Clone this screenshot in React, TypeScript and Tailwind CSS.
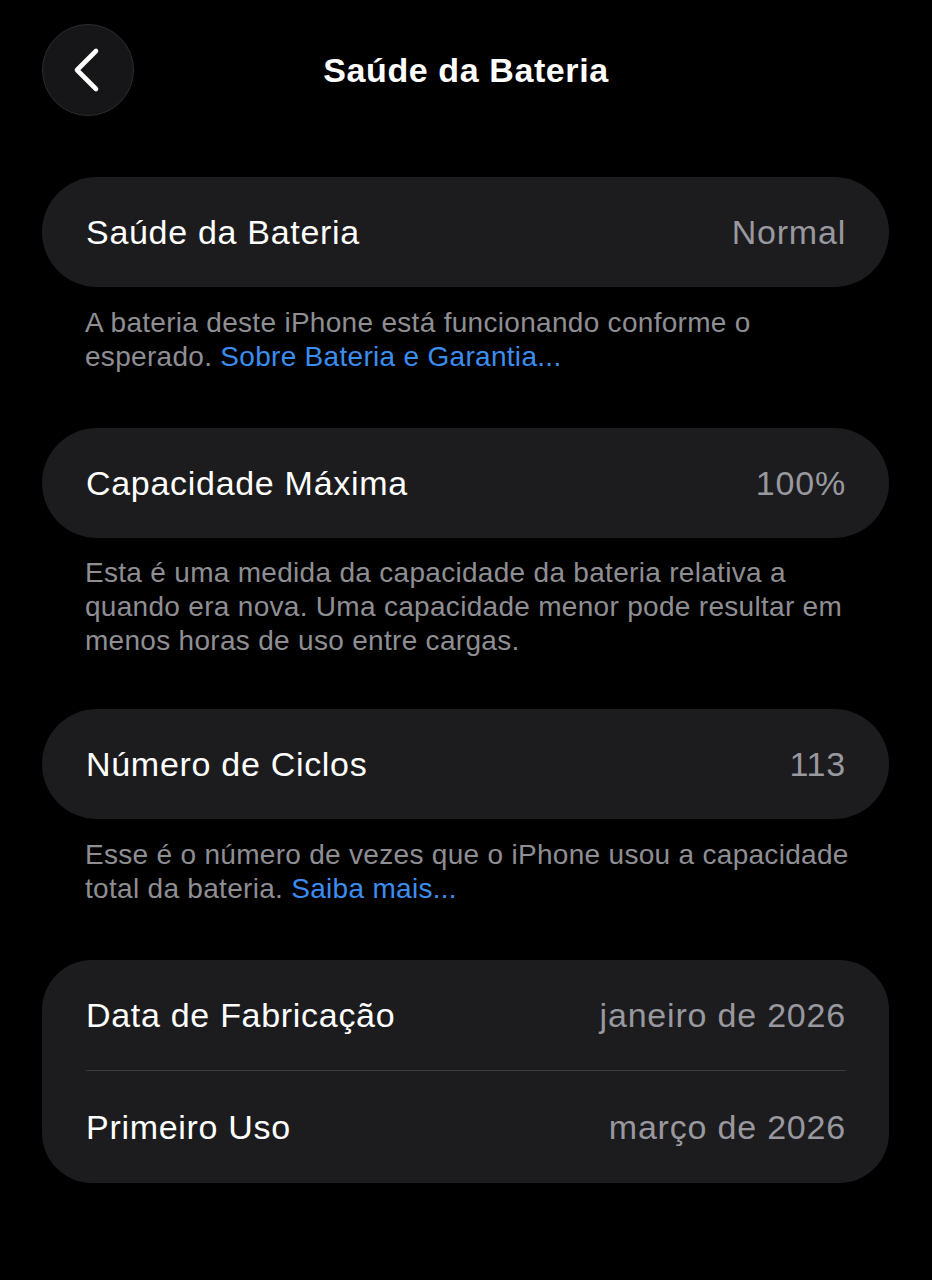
import React from "react";

const font = { fontFamily: '"Liberation Sans", Arial, sans-serif' };

function Row({ label, value, h = "h-[110px]" }: { label: string; value: string; h?: string }) {
  return (
    <div className={`flex ${h} items-center justify-between pl-[44px] pr-[43px]`}>
      <span className="text-[34px] tracking-[0.7px] text-white">{label}</span>
      <span className="text-[34px] tracking-[0.8px] text-[#98989e]">{value}</span>
    </div>
  );
}

export default function App() {
  return (
    <div className="min-h-[1280px] w-full bg-black pb-10" style={font}>
      {/* Header */}
      <div className="grid grid-cols-[92px_1fr_92px] items-center px-[42px] pt-[24px]">
        <button className="flex h-[92px] w-[92px] items-center justify-center rounded-full border border-[#2c2c2e] bg-[#161618]">
          <svg width="40" height="46" viewBox="0 0 40 46" fill="none">
            <path d="M28 4 L9 23 L28 42" stroke="white" strokeWidth="4.6" strokeLinecap="round" strokeLinejoin="round" />
          </svg>
        </button>
        <h1 className="text-center text-[34px] font-bold tracking-[0.6px] text-white">Saúde da Bateria</h1>
        <div />
      </div>

      {/* Section 1 */}
      <div className="mx-[42px] mt-[61px] mr-[43px] rounded-full bg-[#1c1c1e]">
        <Row label="Saúde da Bateria" value="Normal" />
      </div>
      <p className="whitespace-nowrap px-[85px] pt-[19px] text-[28px] leading-[34px] tracking-[0.3px] text-[#8e8e93]">
        A bateria deste iPhone está funcionando conforme o
        <br />
        esperado. <span className="text-[#3b8df0]">Sobre Bateria e Garantia...</span>
      </p>

      {/* Section 2 */}
      <div className="mx-[42px] mt-[54px] mr-[43px] rounded-full bg-[#1c1c1e]">
        <Row label="Capacidade Máxima" value="100%" />
      </div>
      <p className="whitespace-nowrap px-[85px] pt-[18px] text-[28px] leading-[34px] tracking-[0.3px] text-[#8e8e93]">
        Esta é uma medida da capacidade da bateria relativa a
        <br />
        quando era nova. Uma capacidade menor pode resultar em
        <br />
        menos horas de uso entre cargas.
      </p>

      {/* Section 3 */}
      <div className="mx-[42px] mt-[51px] mr-[43px] rounded-full bg-[#1c1c1e]">
        <Row label="Número de Ciclos" value="113" />
      </div>
      <p className="whitespace-nowrap px-[85px] pt-[19px] text-[28px] leading-[34px] tracking-[0.3px] text-[#8e8e93]">
        Esse é o número de vezes que o iPhone usou a capacidade
        <br />
        total da bateria. <span className="text-[#3b8df0]">Saiba mais...</span>
      </p>

      {/* Section 4 */}
      <div className="mx-[42px] mt-[54px] mr-[43px] rounded-[50px] bg-[#1c1c1e]">
        <Row label="Data de Fabricação" value="janeiro de 2026" />
        <div className="ml-[44px] mr-[43px] h-px bg-[#3a3a3c]" />
        <Row label="Primeiro Uso" value="março de 2026" h="h-[112px]" />
      </div>
    </div>
  );
}
